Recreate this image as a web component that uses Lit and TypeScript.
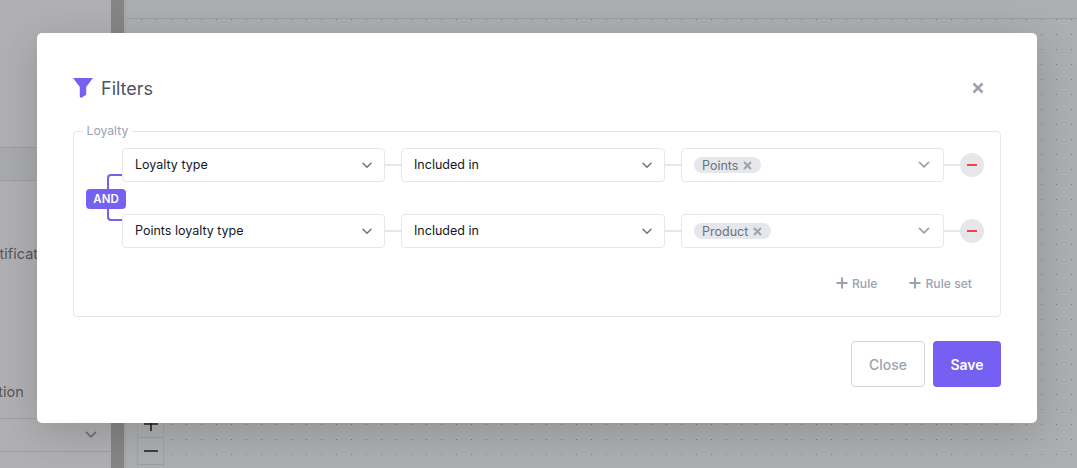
import { LitElement, html, css, svg } from "lit";
import { customElement } from "lit/decorators.js";

const chevron = svg`<svg class="chev" width="10" height="7" viewBox="0 0 10 7"><path d="M1 1.2 L5 5.2 L9 1.2" fill="none" stroke="currentColor" stroke-width="1.5" stroke-linecap="round" stroke-linejoin="round"/></svg>`;
const cross = svg`<svg class="x" width="9" height="9" viewBox="0 0 9 9"><path d="M1 1 L8 8 M8 1 L1 8" fill="none" stroke="currentColor" stroke-width="2"/></svg>`;
const plus = svg`<svg width="12" height="12" viewBox="0 0 12 12"><path d="M6 .5 V11.5 M.5 6 H11.5" fill="none" stroke="currentColor" stroke-width="2"/></svg>`;

@customElement("app-root")
export class AppRoot extends LitElement {
  static styles = css`
    :host { display: block; width: 1077px; height: 468px; position: relative; overflow: hidden; font-family: Inter, "Open Sans", sans-serif; background: #adaeb0; }
    * { box-sizing: border-box; }
    .page { display: flex; height: 468px; }
    .side { width: 110px; background: #b0b0b2; display: flex; flex-direction: column; color: #55565c; font-size: 14.5px; overflow: hidden; flex: none; }
    .s1 { height: 148px; border-bottom: 1px solid #9d9ea0; }
    .s2 { height: 33px; border-bottom: 1px solid #9d9ea0; background: #a9aaac; }
    .s3 { height: 238px; border-bottom: 1px solid #9d9ea0; padding-top: 64px; white-space: nowrap; }
    .s3 div { margin-left: -20px; height: 138px; }
    .s4 { height: 33px; border-bottom: 1px solid #9d9ea0; display: flex; justify-content: flex-end; align-items: center; padding-right: 13px; color: #6f7076; }
    .s4 .chev { width: 12px; height: 8px; }
    .split-gap { width: 1px; background: #adaeb0; flex: none; }
    .split { width: 13px; background: #858585; flex: none; }
    .split-gap2 { width: 3px; background: #a8a9ab; flex: none; }
    .canvas { flex: 1; display: flex; flex-direction: column; background-color: #adaeb0; }
    .dots { flex: 1; display: flex; flex-direction: column; min-height: 0;
      background-image: radial-gradient(circle at 0.5px 0.5px, #77787c 0.5px, transparent 0.8px);
      background-size: 15px 15px; background-position: 14px 0px; }
    .top { height: 19px; background: #adaeb0; border-bottom: 1px solid #9d9ea0; flex: none; }
    .zoomctl { margin: auto 0 -24px 10px; width: 27px; border-left: 1px solid #a2a3a5; border-right: 1px solid #a2a3a5; background: #adaeb0; color: #222; }
    .zoomctl div { height: 27px; border-bottom: 1px solid #9d9ea0; display: flex; align-items: center; justify-content: center; }
    .overlay { position: absolute; inset: 0; padding: 33px 0 0 37px; }
    .modal { width: 1000px; height: 390px; background: #fff; border-radius: 5px; box-shadow: 0 10px 40px rgba(0,0,0,.16); padding: 0 36px; display: flex; flex-direction: column; }
    .head { display: flex; align-items: center; height: 90px; padding-top: 20px; color: #4b5563; font-size: 18px; font-weight: 400; flex: none; }
    .head .title { margin-left: 8px; flex: 1; }
    .head .close { color: #9ca3af; margin-right: 17px; display: flex; }
    fieldset { margin: 0; padding: 9px 16px 0 12px; border: 1px solid #e5e7eb; border-radius: 4px; height: 194px; display: block; flex: none; }
    legend { margin-left: -3px; padding: 0 3.5px; font-size: 12.2px; color: #9ca3af; line-height: 16px; }
    .group { display: flex; }
    .rows { display: flex; flex-direction: column; gap: 32px; margin-left: 36px; position: relative; flex: 1; }
    .row { display: flex; align-items: center; }
    .sel { height: 34px; border: 1px solid #e5e7eb; border-radius: 4px; display: flex; align-items: center; padding: 0 12px; font-size: 12.5px; color: #111827; justify-content: space-between; flex: none; }
    .label { padding-bottom: 2px; }
    .w1 { width: 263px; } .w2 { width: 264px; } .w3 { width: 263px; }
    .chev { color: #6b7280; flex: none; }
    .w3 .chev { color: #9ca3af; margin-right: 1px; width: 12px; height: 8px; }
    .line { width: 16px; height: 2px; background: #e5e7eb; flex: none; }
    .tag { display: inline-flex; align-items: center; gap: 5px; height: 16px; padding: 0 9px 0 8px; background: #e5e7eb; border-radius: 8px; font-size: 12.5px; color: #6b7280; }
    .x { color: #9ca3af; }
    .rm { width: 24px; height: 24px; border-radius: 50%; background: #e5e7eb; display: flex; align-items: center; justify-content: center; flex: none; }
    .rm i { display: block; width: 10px; height: 2px; background: #ef4444; }
    .conn { position: absolute; left: -15px; top: 26px; width: 15px; height: 47px; border: 2px solid #7660f2; border-right: none; border-radius: 4px 0 0 4px; }
    .and { position: absolute; left: -36px; top: 41px; width: 40px; height: 20px; background: #7660f2; color: #fff; border-radius: 4px; font-size: 11.5px; font-weight: 600; display: flex; align-items: center; justify-content: center; }
    .adds { display: flex; justify-content: flex-end; gap: 32px; margin-top: 27px; padding-right: 12px; color: #9ca3af; font-size: 12.2px; font-weight: 500; }
    .adds span { display: flex; align-items: center; gap: 4px; height: 16px; }
    .foot { display: flex; justify-content: flex-end; gap: 8px; margin-top: 24px; flex: none; }
    .btn { height: 46px; border-radius: 4px; display: flex; align-items: center; justify-content: center; font-size: 14px; font-weight: 500; }
    .b1 { width: 74px; border: 1px solid #d1d5db; color: #9ca3af; }
    .b2 { width: 68px; background: #7660f2; color: #fff; font-weight: 600; }
  `;

  private row(a: string, tag: string) {
    return html`<div class="row">
      <div class="sel w1"><span class="label">${a}</span>${chevron}</div>
      <div class="line"></div>
      <div class="sel w2"><span class="label">Included in</span>${chevron}</div>
      <div class="line"></div>
      <div class="sel w3"><span class="tag">${tag}${cross}</span>${chevron}</div>
      <div class="line"></div>
      <div class="rm"><i></i></div>
    </div>`;
  }

  render() {
    return html`
      <div class="page">
        <div class="side">
          <div class="s1"></div>
          <div class="s2"></div>
          <div class="s3"><div>Notification</div><div>Action</div></div>
          <div class="s4">${chevron}</div>
        </div>
        <div class="split-gap"></div>
        <div class="split"></div>
        <div class="split-gap2"></div>
        <div class="canvas">
          <div class="top"></div>
          <div class="dots">
            <div class="zoomctl">
              <div><svg width="14" height="14" viewBox="0 0 14 14"><path d="M7 0 V14 M0 7 H14" stroke="currentColor" stroke-width="1.6"/></svg></div>
              <div><svg width="14" height="14" viewBox="0 0 14 14"><path d="M0 7 H14" stroke="currentColor" stroke-width="1.6"/></svg></div>
              <div></div>
            </div>
          </div>
        </div>
      </div>
      <div class="overlay">
        <div class="modal">
          <div class="head">
            <svg width="20" height="20" viewBox="0 0 20 20"><path d="M0 0 H20 L13.2 9 V16.8 L8.8 19.6 Q6.8 20.2 6.8 18.4 V9 Z" fill="#7660f2"/></svg>
            <span class="title">Filters</span>
            <span class="close"><svg width="12" height="12" viewBox="0 0 12 12"><path d="M1.5 1.5 L10.5 10.5 M10.5 1.5 L1.5 10.5" stroke="currentColor" stroke-width="2.6" fill="none"/></svg></span>
          </div>
          <fieldset>
            <legend>Loyalty</legend>
            <div class="group">
              <div class="rows">
                <div class="conn"></div>
                <div class="and">AND</div>
                ${this.row("Loyalty type", "Points")}
                ${this.row("Points loyalty type", "Product")}
              </div>
            </div>
            <div class="adds"><span>${plus}Rule</span><span>${plus}Rule set</span></div>
          </fieldset>
          <div class="foot">
            <div class="btn b1">Close</div>
            <div class="btn b2">Save</div>
          </div>
        </div>
      </div>
    `;
  }
}
